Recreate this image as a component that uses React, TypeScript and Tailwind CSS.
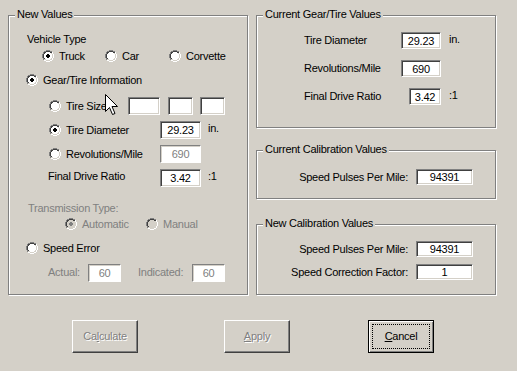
import React from "react";

const RADIO = [
  "....GGGG....",
  "..GGDDDDGG..",
  ".GDDIIIIDDH.",
  ".GDIIIIIILH.",
  "GDIIIIIIIILH",
  "GDIIIIIIIILH",
  "GDIIIIIIIILH",
  "GDIIIIIIIILH",
  ".GDIIIIIILH.",
  ".GLLIIIILLH.",
  "..HHLLLLHH..",
  "....HHHH....",
];

function Radio({ checked = false, disabled = false }: { checked?: boolean; disabled?: boolean }) {
  const colors: Record<string, string> = {
    G: "#808080",
    D: "#404040",
    L: "#d4d0c8",
    H: "#ffffff",
    I: disabled ? "#d4d0c8" : "#ffffff",
  };
  const rects: React.ReactNode[] = [];
  RADIO.forEach((row, y) => {
    row.split("").forEach((c, x) => {
      if (c !== ".") rects.push(<rect key={`${x}-${y}`} x={x} y={y} width={1} height={1} fill={colors[c]} />);
    });
  });
  const dot = disabled ? "#808080" : "#000000";
  return (
    <svg width="12" height="12" viewBox="0 0 12 12" shapeRendering="crispEdges" className="shrink-0 block">
      {rects}
      {checked && (
        <g fill={dot}>
          <rect x={5} y={4} width={2} height={1} />
          <rect x={4} y={5} width={4} height={2} />
          <rect x={5} y={7} width={2} height={1} />
        </g>
      )}
    </svg>
  );
}

function Edit({ value, className = "", disabled = false }: { value?: string; className?: string; disabled?: boolean }) {
  return (
    <div
      className={`shrink-0 flex items-center justify-center bg-white border border-t-[#808080] border-l-[#808080] border-b-white border-r-white leading-none ${
        disabled
          ? "text-[#808080] shadow-[inset_1px_1px_0_#d4d0c8]"
          : "text-black shadow-[inset_1px_1px_0_#404040,inset_-1px_-1px_0_#d4d0c8]"
      } ${className}`}
    >
      <span className="pt-[1px]">{value}</span>
    </div>
  );
}

function Opt({
  label,
  checked = false,
  disabled = false,
  className = "",
}: {
  label: string;
  checked?: boolean;
  disabled?: boolean;
  className?: string;
}) {
  return (
    <div className={`flex items-center ${className}`}>
      <Radio checked={checked} disabled={disabled} />
      <span className={`ml-[5px] whitespace-nowrap ${disabled ? "text-[#808080]" : ""}`}>{label}</span>
    </div>
  );
}

function Group({ title, className = "", children }: { title: string; className?: string; children?: React.ReactNode }) {
  return (
    <div
      className={`relative shrink-0 border border-[#808080] shadow-[inset_1px_1px_0_#fff,1px_1px_0_#fff] ${className}`}
    >
      <span className="absolute left-[6px] top-[-8px] bg-[#d4d0c8] px-[2px] leading-[13px] whitespace-nowrap">
        {title}
      </span>
      <div className="flex flex-col">{children}</div>
    </div>
  );
}

function Btn({
  children,
  disabled = false,
  isDefault = false,
  className = "",
}: {
  children: React.ReactNode;
  disabled?: boolean;
  isDefault?: boolean;
  className?: string;
}) {
  if (isDefault) {
    return (
      <div
        className={`shrink-0 w-[66px] h-[33px] border border-black shadow-[inset_1px_1px_0_#fff,inset_-1px_-1px_0_#808080] p-[3px] ${className}`}
      >
        <div className="w-full h-full border border-dotted border-black flex items-center justify-center">
          {children}
        </div>
      </div>
    );
  }
  return (
    <div
      className={`shrink-0 w-[66px] h-[33px] border border-t-white border-l-white border-b-[#404040] border-r-[#404040] shadow-[inset_-1px_-1px_0_#808080] flex items-center justify-center ${
        disabled ? "text-[#808080] [text-shadow:1px_1px_0_#ffffff]" : ""
      } ${className}`}
    >
      {children}
    </div>
  );
}

export default function App() {
  return (
    <div className="relative w-[517px] h-[371px] overflow-hidden bg-[#d4d0c8] pt-[15px] pl-[8px] font-['Liberation_Sans',Arial,sans-serif] text-[11px] leading-[13px] tracking-[-0.25px] text-black select-none">
      <div className="flex items-start gap-[8px]">
        {/* Left group */}
        <Group title="New Values" className="w-[240px] h-[280px]">
          <div className="h-[14px] mt-[16px] ml-[18px] flex items-center">Vehicle Type</div>
          <div className="h-[14px] mt-[3px] ml-[33px] flex items-center">
            <Opt label="Truck" checked className="w-[63px]" />
            <Opt label="Car" className="w-[64px]" />
            <Opt label="Corvette" />
          </div>
          <div className="h-[14px] mt-[10px] ml-[17px] flex items-center">
            <Opt label="Gear/Tire Information" checked />
          </div>
          <div className="h-[18px] mt-[10px] ml-[40px] flex items-center">
            <Radio />
            <span className="ml-[5px] w-[62px] whitespace-nowrap">Tire Size</span>
            <Edit className="w-[32px] h-[18px]" />
            <Edit className="ml-[8px] w-[25px] h-[18px]" />
            <Edit className="ml-[7px] w-[25px] h-[18px]" />
          </div>
          <div className="h-[18px] mt-[6px] ml-[40px] flex items-center">
            <Radio checked />
            <span className="ml-[5px] w-[94px] whitespace-nowrap">Tire Diameter</span>
            <Edit value="29.23" className="w-[41px] h-[18px]" />
            <span className="ml-[7px] mb-[3px]">in.</span>
          </div>
          <div className="h-[18px] mt-[6px] ml-[40px] flex items-center">
            <Radio />
            <span className="ml-[5px] w-[94px] whitespace-nowrap">Revolutions/Mile</span>
            <Edit value="690" disabled className="w-[41px] h-[18px]" />
          </div>
          <div className="h-[18px] mt-[6px] ml-[39px] flex items-center">
            <span className="w-[112px] mb-[3px] whitespace-nowrap">Final Drive Ratio</span>
            <Edit value="3.42" className="w-[41px] h-[18px]" />
            <span className="ml-[7px] mb-[3px]">:1</span>
          </div>
          <div className="h-[14px] mt-[14px] ml-[19px] flex items-center text-[#808080]">Transmission Type:</div>
          <div className="h-[14px] mt-[2px] ml-[56px] flex items-center">
            <Opt label="Automatic" checked disabled className="w-[81px]" />
            <Opt label="Manual" disabled />
          </div>
          <div className="h-[14px] mt-[10px] ml-[17px] flex items-center">
            <Opt label="Speed Error" />
          </div>
          <div className="h-[18px] mt-[9px] ml-[39px] flex items-center">
            <span className="w-[40px] text-[#808080] mb-[2px]">Actual:</span>
            <Edit value="60" disabled className="w-[33px] h-[18px]" />
            <span className="ml-[17px] w-[54px] text-[#808080] mb-[2px]">Indicated:</span>
            <Edit value="60" disabled className="w-[33px] h-[18px]" />
          </div>
        </Group>

        {/* Right column */}
        <div className="flex flex-col">
          <Group title="Current Gear/Tire Values" className="w-[240px] h-[113px]">
            <div className="h-[17px] mt-[16px] ml-[47px] flex items-center">
              <span className="w-[97px] whitespace-nowrap">Tire Diameter</span>
              <Edit value="29.23" className="w-[40px] h-[17px]" />
              <span className="ml-[8px] mb-[2px]">in.</span>
            </div>
            <div className="h-[17px] mt-[11px] ml-[47px] flex items-center">
              <span className="w-[97px] whitespace-nowrap">Revolutions/Mile</span>
              <Edit value="690" className="w-[40px] h-[17px]" />
            </div>
            <div className="h-[17px] mt-[11px] ml-[47px] flex items-center">
              <span className="w-[105px] whitespace-nowrap">Final Drive Ratio</span>
              <Edit value="3.42" className="w-[32px] h-[17px]" />
              <span className="ml-[8px] mb-[2px]">:1</span>
            </div>
          </Group>

          <Group title="Current Calibration Values" className="mt-[22px] w-[240px] h-[49px]">
            <div className="h-[16px] mt-[18px] flex items-center">
              <span className="w-[151px] text-right whitespace-nowrap">Speed Pulses Per Mile:</span>
              <Edit value="94391" className="ml-[8px] w-[57px] h-[16px]" />
            </div>
          </Group>

          <Group title="New Calibration Values" className="mt-[25px] w-[240px] h-[71px]">
            <div className="h-[16px] mt-[16px] flex items-center">
              <span className="w-[151px] text-right whitespace-nowrap">Speed Pulses Per Mile:</span>
              <Edit value="94391" className="ml-[8px] w-[57px] h-[16px]" />
            </div>
            <div className="h-[16px] mt-[7px] flex items-center">
              <span className="w-[151px] text-right whitespace-nowrap">Speed Correction Factor:</span>
              <Edit value="1" className="ml-[8px] w-[57px] h-[16px]" />
            </div>
          </Group>
        </div>
      </div>

      {/* Buttons */}
      <div className="flex mt-[25px] ml-[64px]">
        <Btn disabled>
          <span>
            Ca<u className="underline-offset-[1px]">l</u>culate
          </span>
        </Btn>
        <Btn disabled className="ml-[86px]">
          <span>
            <u className="underline-offset-[1px]">A</u>pply
          </span>
        </Btn>
        <Btn isDefault className="ml-[78px]">
          <span>
            <u className="underline-offset-[1px]">C</u>ancel
          </span>
        </Btn>
      </div>

      {/* Mouse cursor */}
      <svg
        width="13"
        height="22"
        viewBox="0 0 13 22"
        shapeRendering="crispEdges"
        className="absolute left-[105px] top-[94px]"
      >
        <path
          d="M0.5 0.5 L0.5 17.5 L4.5 13.5 L7.5 20.5 L10 19.5 L7 12.5 L12.5 12.5 Z"
          fill="#ffffff"
          stroke="#000000"
          strokeWidth="1"
          shapeRendering="auto"
        />
      </svg>
    </div>
  );
}
